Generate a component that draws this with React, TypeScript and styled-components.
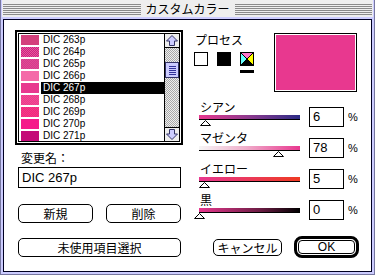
import styled, { createGlobalStyle } from "styled-components";

const PINK = "#e8388f";

const colors = [
    { name: "DIC 263p", color: "#d4407c" },
    { name: "DIC 264p", color: "#cc2280", dither: "#e8589c" },
    { name: "DIC 265p", color: "#d63a8c", dither: "#e04a96" },
    { name: "DIC 266p", color: "#f46aa8" },
    { name: "DIC 267p", color: PINK },
    { name: "DIC 268p", color: "#ec3a8a", dither: "#f24c96" },
    { name: "DIC 269p", color: "#f0287c", dither: "#f43a88" },
    { name: "DIC 270p", color: "#f5198a" },
    { name: "DIC 271p", color: "#c40a78" },
];

const SELECTED = "DIC 267p";

const sliders = [
    { label: "シアン", value: 6, gradient: `linear-gradient(to right, ${PINK}, #8c3a8e 50%, #2c2c86)` },
    { label: "マゼンタ", value: 78, gradient: `linear-gradient(to right, #f6f6f6, #f0b0cc 45%, ${PINK})` },
    { label: "イエロー", value: 5, gradient: `linear-gradient(to right, ${PINK}, #ee3a22)` },
    { label: "黒", value: 0, gradient: `linear-gradient(to right, ${PINK}, #6c1c44 60%, #000)` },
];

const Arrow = ({ down }: { down?: boolean }) => (
    <svg width="14" height="13" viewBox="0 0 14 13" style={down ? { transform: "rotate(180deg)" } : undefined}>
        <path d="M7 1.5 L12.5 7 L9.5 7 L9.5 11.5 L4.5 11.5 L4.5 7 L1.5 7 Z" fill="#ccccff" stroke="#333366" strokeWidth="1" />
    </svg>
);

const CmykIcon = () => (
    <svg width="14" height="14" viewBox="0 0 14 14">
        <polygon points="0,0 14,0 7,7" fill="#ff77cc" />
        <polygon points="0,0 7,7 0,14" fill="#66ffff" />
        <polygon points="14,0 14,14 7,7" fill="#ffff00" />
        <polygon points="0,14 7,7 14,14" fill="#000" />
        <line x1="0" y1="0" x2="14" y2="14" stroke="#000" strokeWidth="1" />
        <line x1="14" y1="0" x2="0" y2="14" stroke="#000" strokeWidth="1" />
        <rect x="0.5" y="0.5" width="13" height="13" fill="none" stroke="#000" />
    </svg>
);

const Marker = () => (
    <svg width="11" height="6" viewBox="0 0 11 6">
        <polygon points="5.5,0.5 10.5,5.5 0.5,5.5" fill="#fff" stroke="#000" strokeWidth="1" />
    </svg>
);

const App = () => {
    return (
        <>
            <GlobalStyle />
            <Window>
                <TitleBar>
                    <Stripes />
                    <Title>カスタムカラー</Title>
                    <Stripes />
                </TitleBar>
                <Body>
                    <LeftColumn>
                        <ListFrame>
                            <List>
                                <Items>
                                    {colors.map((c) => (
                                        <Item key={c.name}>
                                            <Swatch color={c.color} dither={c.dither} />
                                            <ItemName selected={c.name === SELECTED}>{c.name}</ItemName>
                                        </Item>
                                    ))}
                                </Items>
                                <ScrollBar>
                                    <ArrowBox>
                                        <Arrow />
                                    </ArrowBox>
                                    <Track>
                                        <Thumb>
                                            <ThumbLine />
                                            <ThumbLine />
                                            <ThumbLine />
                                            <ThumbLine />
                                            <ThumbLine />
                                        </Thumb>
                                    </Track>
                                    <ArrowBox bottom>
                                        <Arrow down />
                                    </ArrowBox>
                                </ScrollBar>
                            </List>
                        </ListFrame>
                        <FormArea>
                            <FieldLabel>変更名：</FieldLabel>
                            <TextField>DIC 267p</TextField>
                            <ButtonRow>
                                <Button>新規</Button>
                                <Button>削除</Button>
                            </ButtonRow>
                            <WideButton>未使用項目選択</WideButton>
                        </FormArea>
                    </LeftColumn>

                    <RightColumn>
                        <TopSection>
                            <Process>
                                <ProcessLabel>プロセス</ProcessLabel>
                                <ModeRow>
                                    <ModeOption>
                                        <ModeBox fill="#fff" />
                                    </ModeOption>
                                    <ModeOption>
                                        <ModeBox fill="#000" />
                                    </ModeOption>
                                    <ModeOption>
                                        <CmykIcon />
                                        <ModeIndicator />
                                    </ModeOption>
                                </ModeRow>
                            </Process>
                            <Preview />
                        </TopSection>

                        <Sliders>
                            {sliders.map((s) => (
                                <SliderRow key={s.label}>
                                    <SliderTrack>
                                        <SliderLabel>{s.label}</SliderLabel>
                                        <Bar gradient={s.gradient} />
                                        <MarkerWrap style={{ marginLeft: `calc(${s.value}% - 5px)` }}>
                                            <Marker />
                                        </MarkerWrap>
                                    </SliderTrack>
                                    <ValueGroup>
                                        <ValueBox>{s.value}</ValueBox>
                                        <Percent>%</Percent>
                                    </ValueGroup>
                                </SliderRow>
                            ))}
                        </Sliders>

                        <DialogButtons>
                            <CancelButton>キャンセル</CancelButton>
                            <DefaultRing>
                                <OkButton>OK</OkButton>
                            </DefaultRing>
                        </DialogButtons>
                    </RightColumn>
                </Body>
            </Window>
        </>
    );
};

const GlobalStyle = createGlobalStyle`
    html, body {
        margin: 0;
        padding: 0;
        background: #fff;
    }

    body {
        font-family: "Noto Sans CJK JP", sans-serif;
        font-size: 12px;
        color: #000;
    }

    * {
        box-sizing: border-box;
    }
`;

const Window = styled.div`
    display: flex;
    flex-direction: column;

    width: 375px;
    height: 275px;

    padding: 0 2px 2px;

    background: #ccccff;
    border: 1px solid #7777a0;
    border-top: none;
`;

const TitleBar = styled.div`
    display: flex;
    align-items: center;

    height: 17px;
    margin: 0 -1px 2px;
    padding: 0 1px;

    background: #eeeeee;
`;

const Stripes = styled.div`
    flex: 1;

    height: 11px;
    margin-top: 2px;

    background: repeating-linear-gradient(to bottom, #8a8a8a 0 1px, #eeeeee 1px 2px);
`;

const Title = styled.div`
    padding: 0 5px;

    font-size: 12px;
    line-height: 17px;
`;

const Body = styled.div`
    flex: 1;

    display: grid;
    grid-template-columns: 168px 165px;
    column-gap: 11px;
    align-items: start;

    padding: 10px 0 0 11px;

    background: #fff;
    border: 1px solid #000022;
`;

const LeftColumn = styled.div`
    display: flex;
    flex-direction: column;
`;

const ListFrame = styled.div`
    width: 168px;
    height: 115px;

    padding: 1px;

    border: 2px solid #000;
    background: #fff;
`;

const List = styled.div`
    display: flex;

    height: 100%;

    border: 1px solid #000;
    overflow: hidden;
`;

const Items = styled.div`
    flex: 1;

    display: flex;
    flex-direction: column;
`;

const Item = styled.div`
    display: flex;
    align-items: center;

    height: 12px;
    flex-shrink: 0;

    padding-left: 2px;
`;

const Swatch = styled.div<{ color: string; dither?: string }>`
    width: 18px;
    height: 10px;

    background: ${(props) =>
        props.dither
            ? `repeating-conic-gradient(${props.color} 0 25%, ${props.dither} 0 50%) 0 0 / 2px 2px`
            : props.color};
`;

const ItemName = styled.div<{ selected?: boolean }>`
    flex: 1;

    height: 12px;
    margin-left: 2px;
    padding-left: 2px;

    font-family: "Liberation Sans", sans-serif;
    font-size: 10px;
    line-height: 12px;

    color: ${(props) => (props.selected ? "#fff" : "#000")};
    background: ${(props) => (props.selected ? "#000" : "transparent")};
`;

const ScrollBar = styled.div`
    display: flex;
    flex-direction: column;

    width: 15px;

    border-left: 1px solid #000;
`;

const ArrowBox = styled.div<{ bottom?: boolean }>`
    display: flex;
    align-items: center;
    justify-content: center;

    height: 14px;

    background: #eeeeee;
    border-bottom: ${(props) => (props.bottom ? "none" : "1px solid #000")};
    border-top: ${(props) => (props.bottom ? "1px solid #000" : "none")};
`;

const Track = styled.div`
    flex: 1;

    padding-top: 14px;

    background: repeating-conic-gradient(#a8a8a8 0 25%, #eeeeee 0 50%) 0 0 / 2px 2px;
`;

const Thumb = styled.div`
    display: flex;
    flex-direction: column;
    align-items: center;
    justify-content: center;
    gap: 1px;

    height: 16px;

    background: #ccccff;
    border: 1px solid #333366;
`;

const ThumbLine = styled.div`
    width: 7px;
    height: 1px;

    background: #333399;
`;

const FormArea = styled.div`
    display: flex;
    flex-direction: column;

    padding: 0 2px 0 3px;
`;

const FieldLabel = styled.div`
    margin: 6px 0 0 3px;

    font-size: 12px;
    line-height: 13px;
`;

const TextField = styled.div`
    height: 21px;
    margin-top: 3px;
    padding-left: 3px;

    font-family: "Liberation Sans", sans-serif;
    font-size: 13px;
    line-height: 19px;

    border: 1px solid #000;
`;

const ButtonRow = styled.div`
    display: flex;
    justify-content: space-between;

    margin-top: 16px;
`;

const Button = styled.div`
    display: flex;
    align-items: center;
    justify-content: center;

    width: 75px;
    height: 19px;

    font-size: 12px;

    border: 1px solid #000;
    border-radius: 5px;
`;

const WideButton = styled(Button)`
    width: 100%;
    margin-top: 15px;
`;

const RightColumn = styled.div`
    display: flex;
    flex-direction: column;
`;

const TopSection = styled.div`
    display: flex;
    justify-content: space-between;

    margin-top: 3px;
`;

const Process = styled.div`
    display: flex;
    flex-direction: column;
`;

const ProcessLabel = styled.div`
    margin-left: 1px;

    font-size: 12px;
    line-height: 14px;
`;

const ModeRow = styled.div`
    display: flex;
    gap: 9px;

    margin-top: 5px;
`;

const ModeOption = styled.div`
    display: flex;
    flex-direction: column;
    gap: 4px;
`;

const ModeBox = styled.div<{ fill: string }>`
    width: 14px;
    height: 14px;

    background: ${(props) => props.fill};
    border: 1px solid #000;
`;

const ModeIndicator = styled.div`
    width: 14px;
    height: 3px;

    background: #000;
`;

const Preview = styled.div`
    width: 83px;
    height: 59px;
    margin-right: 2px;

    background: ${PINK};
    border: 1px solid #000;
    box-shadow: inset 0 0 0 1px #fff;
`;

const Sliders = styled.div`
    display: flex;
    flex-direction: column;

    margin-top: 8px;
`;

const SliderRow = styled.div`
    display: flex;
    align-items: flex-start;
    gap: 9px;

    height: 31px;
    padding-left: 5px;
`;

const SliderTrack = styled.div`
    display: flex;
    flex-direction: column;

    width: 101px;
`;

const SliderLabel = styled.div`
    margin-left: 1px;

    font-size: 12px;
    line-height: 13px;
`;

const Bar = styled.div<{ gradient: string }>`
    height: 5px;
    margin-top: 2px;

    background: ${(props) => props.gradient};
    border-bottom: 1px solid #000;
`;

const MarkerWrap = styled.div`
    display: flex;

    width: 11px;
    height: 6px;
`;

const ValueGroup = styled.div`
    display: flex;
    align-items: center;
    gap: 4px;

    margin-top: 7px;
`;

const ValueBox = styled.div`
    width: 35px;
    height: 20px;
    padding-left: 3px;

    font-family: "Liberation Sans", sans-serif;
    font-size: 13px;
    line-height: 18px;

    border: 1px solid #000;
`;

const Percent = styled.div`
    font-family: "Liberation Sans", sans-serif;
    font-size: 11px;
`;

const DialogButtons = styled.div`
    display: flex;
    align-items: center;
    justify-content: flex-end;
    gap: 12px;

    margin-top: 12px;
`;

const CancelButton = styled.div`
    display: flex;
    align-items: center;
    justify-content: center;

    width: 69px;
    height: 17px;

    font-size: 12px;

    border: 1px solid #000;
    border-radius: 5px;
`;

const DefaultRing = styled.div`
    width: 65px;
    height: 22px;

    padding: 1px;

    border: 3px solid #000;
    border-radius: 8px;
`;

const OkButton = styled.div`
    display: flex;
    align-items: center;
    justify-content: center;

    height: 100%;

    font-family: "Liberation Sans", sans-serif;
    font-size: 12px;

    border: 1px solid #000;
    border-radius: 4px;
`;

export default App;
